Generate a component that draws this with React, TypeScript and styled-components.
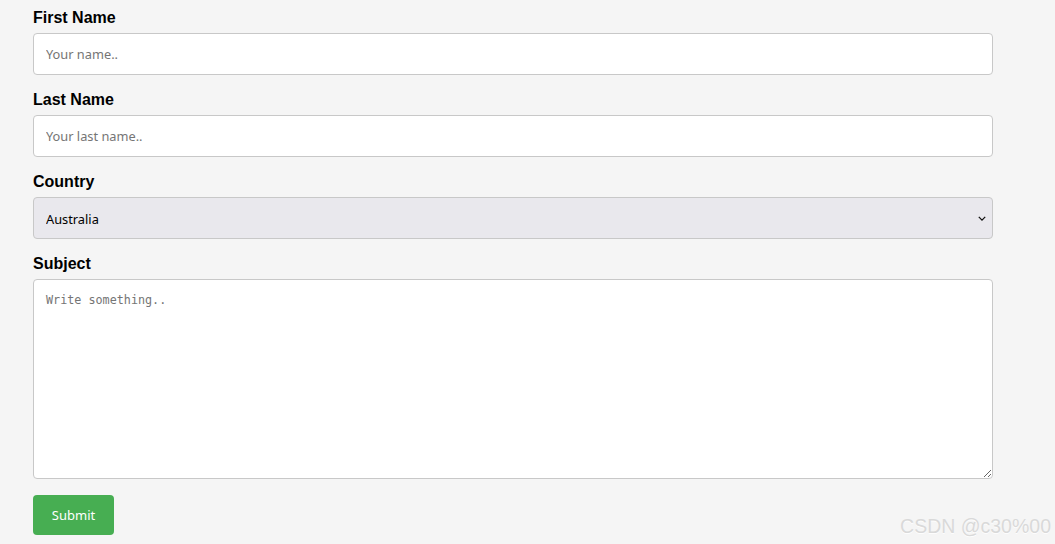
import styled, { createGlobalStyle } from 'styled-components';

const GlobalStyle = createGlobalStyle`
  html, body {
    margin: 0;
    padding: 0;
    background: #f5f5f5;
  }
  body {
    font-family: "Liberation Sans", Arial, sans-serif;
  }
`;

export default function App() {
  return (
    <>
      <GlobalStyle />
      <Page>
        <Form onSubmit={(e) => e.preventDefault()}>
          <Label htmlFor="fname">First Name</Label>
          <TextInput id="fname" type="text" placeholder="Your name.." />

          <Label htmlFor="lname">Last Name</Label>
          <TextInput id="lname" type="text" placeholder="Your last name.." />

          <Label htmlFor="country">Country</Label>
          <Select id="country" defaultValue="australia">
            <option value="australia">Australia</option>
            <option value="canada">Canada</option>
            <option value="usa">USA</option>
          </Select>

          <Label htmlFor="subject">Subject</Label>
          <TextArea id="subject" placeholder="Write something.." />

          <SubmitButton type="submit">Submit</SubmitButton>
        </Form>
        <Watermark>CSDN @c30%00</Watermark>
      </Page>
    </>
  );
}

//****************************************************//

const Page = styled.div`
  position: relative;
  height: 544px;
  padding: 8px 0 0 33px;
  box-sizing: border-box;
`;

const Form = styled.form`
  width: 960px;
  display: flex;
  flex-direction: column;
  align-items: flex-start;
`;

const Label = styled.label`
  font-size: 16px;
  font-weight: bold;
  line-height: 18px;
  color: #000;
  padding-top: 1px;
  margin-bottom: 6px;
`;

const fieldBase = `
  width: 100%;
  box-sizing: border-box;
  border: 1px solid #c8c8c8;
  border-radius: 4px;
  padding: 12px;
  margin: 0 0 15px 0;
  outline: none;
`;

const TextInput = styled.input`
  ${fieldBase}
  height: 42px;
  background: #fff;
  font-family: "Noto Sans", "Open Sans", sans-serif;
  font-size: 12.8px;
  color: #222;

  &::placeholder {
    color: #757575;
  }
`;

const Select = styled.select`
  ${fieldBase}
  height: 42px;
  appearance: none;
  -webkit-appearance: none;
  background-color: #e9e8ed;
  background-image: url("data:image/svg+xml,%3Csvg xmlns='http://www.w3.org/2000/svg' width='10' height='6' viewBox='0 0 10 6'%3E%3Cpath d='M1 1l4 4 4-4' fill='none' stroke='%23111' stroke-width='1.6'/%3E%3C/svg%3E");
  background-repeat: no-repeat;
  background-position: right 6px center;
  background-size: 8px 5px;
  font-family: "Noto Sans", "Open Sans", sans-serif;
  font-size: 12.8px;
  color: #000;
`;

const TextArea = styled.textarea`
  ${fieldBase}
  height: 200px;
  margin-bottom: 16px;
  padding-top: 13px;
  background: #fff;
  resize: vertical;
  font-family: "DejaVu Sans Mono", "Liberation Mono", monospace;
  font-size: 11.75px;

  &::placeholder {
    color: #757575;
  }
`;

const SubmitButton = styled.button`
  width: 81px;
  height: 40px;
  border: none;
  border-radius: 4px;
  background: #47ae52;
  color: #fff;
  font-family: "Noto Sans", "Open Sans", sans-serif;
  font-size: 13px;
  cursor: pointer;
  padding: 0;
`;

const Watermark = styled.div`
  position: absolute;
  right: 4px;
  bottom: 6px;
  font-family: "Liberation Sans", Arial, sans-serif;
  font-size: 19.5px;
  font-weight: normal;
  color: #d9d9d9;
  text-shadow: 0 1px 0 rgba(255, 255, 255, 0.9);
  pointer-events: none;
`;
